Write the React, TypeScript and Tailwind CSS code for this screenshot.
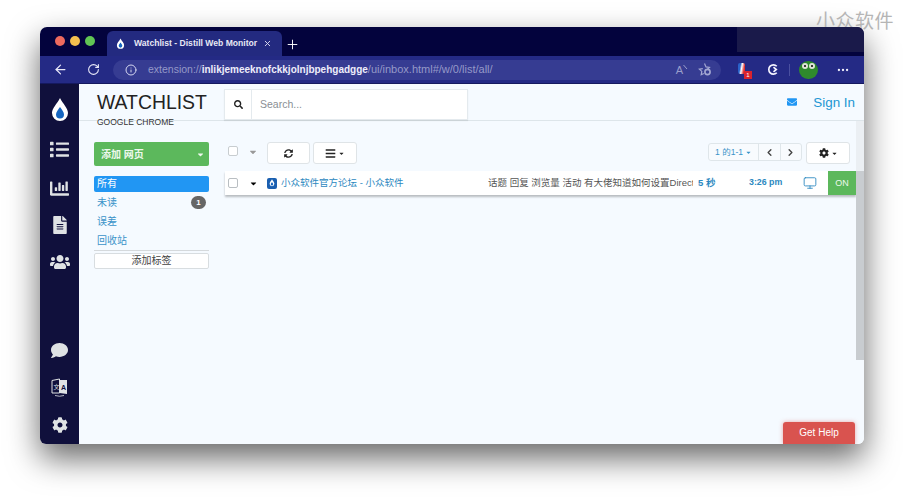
import React from "react";
import { ArrowLeft, RotateCw, Info, Plus, X, ChevronLeft, ChevronRight, Monitor, MoreHorizontal } from "lucide-react";
import { FaList, FaChartBar, FaFileAlt, FaUsers, FaComment, FaCog, FaSearch, FaSyncAlt, FaBars, FaEnvelope, FaCaretDown } from "react-icons/fa";

const Drop = ({ s = 20 }: { s?: number }) => (
  <svg width={s} height={s * 1.2} viewBox="0 0 20 24">
    <path d="M10 1 C13 7 18 11 18 16 A8 8 0 0 1 2 16 C2 11 7 7 10 1Z" fill="#fff" />
    <path d="M10 10 C12 13 14 15 14 17.5 A4 4 0 0 1 6 17.5 C6 15 8 13 10 10Z" fill="#1565c0" />
  </svg>
);

const Translate = () => (
  <svg width="17" height="20" viewBox="0 0 17 20" className="mt-[17px]">
    <path d="M1 3.5 L8.5 2 V16 L1 16Z" fill="#10103c" stroke="#dfe2e4" strokeWidth="1" />
    <path d="M8.5 3 H16 V17 L8.5 16Z" fill="#dfe2e4" />
    <text x="2.4" y="12" fontSize="6" fill="#dfe2e4" fontFamily="Noto Sans CJK SC">文</text>
    <text x="10" y="12.5" fontSize="7" fontWeight="700" fill="#10103c" fontFamily="Liberation Sans">A</text>
    <path d="M4 18.5 Q8.5 20 13 18.5" fill="none" stroke="#dfe2e4" strokeWidth="0.8" />
  </svg>
);

export default function App() {
  return (
    <div className="relative w-[904px] h-[497px] overflow-hidden bg-white pt-[27px] pl-[40px] font-['Liberation_Sans','Noto_Sans_CJK_SC',sans-serif]">
      <div className="absolute top-[10px] right-[10px] text-[19px] leading-[24px] tracking-[0.5px] text-[#b5b5b5]">小众软件</div>
      <div className="w-[824px] h-[417px] rounded-t-[7px] rounded-b-[6px] overflow-hidden flex flex-col shadow-[0_14px_32px_rgba(0,0,0,0.6)]">
        {/* tab strip */}
        <div className="h-[29px] shrink-0 bg-[#03033d] flex items-end relative">
          <div className="flex items-center gap-[5px] pl-[15px] h-[29px] pb-[1px]">
            <span className="w-[10px] h-[10px] rounded-full bg-[#ed6a5e]" />
            <span className="w-[10px] h-[10px] rounded-full bg-[#f4bf4f]" />
            <span className="w-[10px] h-[10px] rounded-full bg-[#61c554]" />
          </div>
          <div className="ml-[12px] w-[175px] h-[25px] rounded-t-[6px] bg-[#232a80] flex items-center pl-[9px] text-white">
            <Drop s={9} />
            <span className="ml-[9px] text-[8.6px] font-bold text-[#e8e8f5] whitespace-nowrap">Watchlist - Distill Web Monitor</span>
            <X size={9} strokeWidth={2.5} className="ml-[6px] text-[#dcdcf0]" />
          </div>
          <Plus size={15} className="text-white ml-[3px] mb-[4px]" strokeWidth={1.5} />
          <div className="absolute right-0 top-0 w-[127px] h-[25px] bg-[#1a1a4a]" />
        </div>
        {/* address bar */}
        <div className="h-[28px] shrink-0 bg-[#242a85] flex items-center text-white relative border-b border-[#15195f]">
          <ArrowLeft size={15} className="ml-[13px] text-[#e8e8f8]" />
          <RotateCw size={13} className="ml-[19px] text-[#e8e8f8]" />
          <div className="ml-[13px] w-[608px] h-[20px] rounded-full bg-[#363c92] flex items-center pl-[12px]">
            <Info size={12} className="text-[#d5d7f0]" />
            <span className="ml-[11px] text-[10.5px] text-[#9599c8] whitespace-nowrap">extension://<span className="text-[10px] text-[#eeeefa] font-bold">inlikjemeeknofckkjolnjbpehgadgge</span><span className="text-[11px]">/ui/inbox.html#/w/0/list/all/</span></span>
            <span className="ml-auto text-[11px] leading-[12px] text-[#9a9ecb]">A</span>
            <svg width="5" height="6" viewBox="0 0 5 6" className="mb-[5px]" fill="none" stroke="#9a9ecb" strokeWidth="1"><path d="M0.5 1 L4 5" /></svg>
            <svg width="15" height="15" viewBox="0 0 15 15" className="ml-[10px] mr-[8px]" fill="none" stroke="#a4a8d2" strokeWidth="1.2"><path d="M6.5 1.5l1.5 3.4 3.4.5-2.5 2.3M5.8 11.5l-2.6 1.3.6-3.4-2.4-2.2 3.4-.5" /><circle cx="9.5" cy="10" r="2.6" strokeWidth="1.6" /></svg>
          </div>
          <div className="relative ml-[16px] w-[12px] h-[14px]">
            <span className="absolute left-[1px] top-0 w-[7px] h-[11px] bg-[linear-gradient(100deg,#2962c9_30%,#fff_50%,#d33_80%)] rounded-[2px]" />
            <span className="absolute right-[-3px] bottom-[-2px] w-[8px] h-[8px] bg-[#d9232e] text-[6px] leading-[8px] text-center text-white">1</span>
          </div>
          <svg width="13" height="13" viewBox="0 0 14 14" className="ml-[18px]" fill="none" stroke="#f4f4ff" strokeWidth="1.8"><path d="M10.5 3.5A5 5 0 1 0 10.5 10.5M7 4.5l3 2.5-3 2.5" /></svg>
          <span className="ml-[9px] w-px h-[12px] bg-[#4a50a0]" />
          <div className="ml-[9px] w-[19px] h-[18px] rounded-full bg-[#2f8a2c] relative overflow-hidden">
            <span className="absolute left-[3px] top-[2px] w-[6px] h-[6px] rounded-full bg-[#dfe5d8]" />
            <span className="absolute right-[3px] top-[2px] w-[6px] h-[6px] rounded-full bg-[#dfe5d8]" />
            <span className="absolute left-[5px] top-[4px] w-[2px] h-[2px] rounded-full bg-black" />
            <span className="absolute right-[5px] top-[4px] w-[2px] h-[2px] rounded-full bg-black" />
          </div>
          <MoreHorizontal size={14} className="ml-[18px] text-[#eeeefa]" />
        </div>
        {/* app */}
        <div className="flex-1 flex min-h-0">
          <div className="w-[39px] shrink-0 bg-[#10103c] flex flex-col items-center text-[#dfe2e4] pt-[13px] pb-[11px]">
            <Drop s={20} />
            <FaList size={19} className="mt-[19px]" />
            <FaChartBar size={19} className="mt-[20px]" />
            <FaFileAlt size={18} className="mt-[18px]" />
            <FaUsers size={20} className="mt-[18px]" />
            <FaComment size={17} className="mt-auto mb-[1px]" />
            <Translate />
            <FaCog size={16} className="mt-[20px]" />
          </div>
          <div className="flex-1 bg-[#f5faff] flex flex-col min-w-0 relative">
            {/* header */}
            <div className="h-[37px] shrink-0 border-b border-[#dde5ea] flex items-start">
              <div className="w-[145px] pl-[18px] shrink-0">
                <div className="text-[19.4px] leading-[24px] mt-[6px] text-[#222] whitespace-nowrap">WATCHLIST</div>
                <div className="text-[8.5px] leading-[10px] mt-[3px] text-[#333] whitespace-nowrap">GOOGLE CHROME</div>
              </div>
              <div className="w-[244px] h-[31px] mt-[5px] flex bg-white border border-[#e4eaee] shadow-[0_1px_1px_rgba(0,0,0,0.08)]">
                <div className="w-[27px] flex items-center justify-center border-r border-[#e4eaee]"><FaSearch size={9} className="text-[#222]" /></div>
                <span className="ml-[8px] self-center text-[10.5px] text-[#8a8f94]">Search...</span>
              </div>
              <FaEnvelope size={10} className="ml-auto mt-[13px] text-[#2196f3]" />
              <span className="ml-[16px] mr-[9px] mt-[10px] text-[13.4px] leading-[18px] text-[#2196d3]">Sign In</span>
            </div>
            {/* body */}
            <div className="flex flex-1 min-h-0">
              <div className="w-[145px] shrink-0 pl-[15px] pr-[15px]">
                <div className="mt-[21px] h-[24px] rounded-[2px] bg-[#5cb85c] flex items-center text-[#eef8ee] text-[10px] font-semibold pl-[7px] pr-[4px]">
                  添加 网页
                  <span className="ml-auto"><FaCaretDown size={9} /></span>
                </div>
                <div className="mt-[10px] h-[16px] rounded-[2px] bg-[#2196f3] text-white text-[10px] leading-[16px] pl-[3px]">所有</div>
                <div className="h-[19px] mt-[1px] flex items-center pl-[3px] text-[10px] text-[#3a93c9]">未读
                  <span className="ml-auto mr-[3px] w-[15px] h-[13px] rounded-full bg-[#666] text-white text-[8px] leading-[13px] text-center font-bold">1</span>
                </div>
                <div className="h-[19px] flex items-center pl-[3px] text-[10px] text-[#3a93c9]">误差</div>
                <div className="h-[20px] flex items-center pl-[3px] text-[10px] text-[#3a93c9] border-b border-[#d5d9dc]">回收站</div>
                <div className="mt-[2px] h-[16px] bg-white border border-[#d8dde0] rounded-[2px] text-center text-[10px] leading-[14px] text-[#444]">添加标签</div>
              </div>
              <div className="flex-1 min-w-0 flex flex-col">
                <div className="h-[50px] shrink-0 flex">
                  <div className="flex-1 min-w-0 flex items-start">
                    <span className="ml-[4px] mt-[25px] w-[10px] h-[10px] border border-[#c8cdd0] rounded-[2px] bg-white" />
                    <span className="ml-[10px] mt-[26px]"><FaCaretDown className="text-[#999] text-[10px]" /></span>
                    <div className="ml-[9px] mt-[21px] w-[43px] h-[22px] bg-white border border-[#dfe4e7] rounded-[3px] flex items-center justify-center"><FaSyncAlt size={9} className="text-[#222]" /></div>
                    <div className="ml-[3px] mt-[21px] w-[44px] h-[22px] bg-white border border-[#dfe4e7] rounded-[3px] flex items-center justify-center gap-[2px]"><FaBars size={11} className="text-[#222]" /><FaCaretDown size={7} className="text-[#222]" /></div>
                    <div className="ml-auto mt-[22px] w-[94px] h-[18px] flex bg-[#f8fbfe] border border-[#dfe6ea] rounded-[3px] text-[8.5px] text-[#3a93c9]">
                      <div className="w-[50px] flex items-center justify-center border-r border-[#dfe6ea] whitespace-nowrap">1 的1-1<FaCaretDown size={7} className="ml-[2px]" /></div>
                      <div className="flex-1 flex items-center justify-center border-r border-[#dfe6ea]"><ChevronLeft size={11} strokeWidth={3} className="text-[#444]" /></div>
                      <div className="flex-1 flex items-center justify-center"><ChevronRight size={11} strokeWidth={3} className="text-[#444]" /></div>
                    </div>
                    <div className="ml-[4px] mr-[6px] mt-[21px] w-[44px] h-[22px] bg-white border border-[#dfe4e7] rounded-[3px] flex items-center justify-center gap-[2px]"><FaCog size={10} className="text-[#222]" /><FaCaretDown size={7} className="text-[#222]" /></div>
                  </div>
                  <div className="w-[8px] shrink-0 bg-[#ebeff3]" />
                </div>
                <div className="ml-[1px] flex flex-1 min-h-0">
                  <div className="h-[24px] flex-1 min-w-0 flex items-center bg-white shadow-[0_2px_2px_rgba(0,0,0,0.25)] whitespace-nowrap">
                    <span className="ml-[3px] w-[10px] h-[10px] shrink-0 border border-[#b9bec2] rounded-[2px] bg-white" />
                    <span className="ml-[11px] shrink-0"><FaCaretDown size={9} className="text-black" /></span>
                    <span className="ml-[9px] w-[10px] h-[11px] shrink-0 rounded-[2px] bg-[#1a5fb0] flex items-center justify-center"><Drop s={6} /></span>
                    <span className="ml-[4px] w-[207px] shrink-0 text-[9.5px] text-[#2c88c0]">小众软件官方论坛 - 小众软件</span>
                    <span className="w-[205px] shrink-0 overflow-hidden text-[9.5px] text-[#555]">话题 回复 浏览量 活动 有大佬知道如何设置Direct</span>
                    <span className="ml-[5px] w-[51px] shrink-0 text-[9.5px] font-semibold text-[#2c88c0]">5 秒</span>
                    <span className="w-[54px] shrink-0 text-[8.8px] font-bold text-[#2c88c0]">3:26 pm</span>
                    <Monitor size={14} strokeWidth={1.5} className="shrink-0 text-[#2c88c0]" />
                    <span className="ml-auto w-[28px] h-[24px] shrink-0 bg-[#5cb85c] text-[#eef8ee] text-[9px] leading-[24px] text-center">ON</span>
                  </div>
                  <div className="w-[8px] shrink-0 h-[189px] bg-[#c8ccd0]" />
                </div>
              </div>
            </div>
            <div className="absolute right-[9px] bottom-0 w-[72px] h-[22px] rounded-t-[3px] bg-[#d9534f] text-white text-[10px] leading-[22px] text-center shadow-[0_0_4px_rgba(217,83,79,0.5)]">Get Help</div>
          </div>
        </div>
      </div>
    </div>
  );
}
